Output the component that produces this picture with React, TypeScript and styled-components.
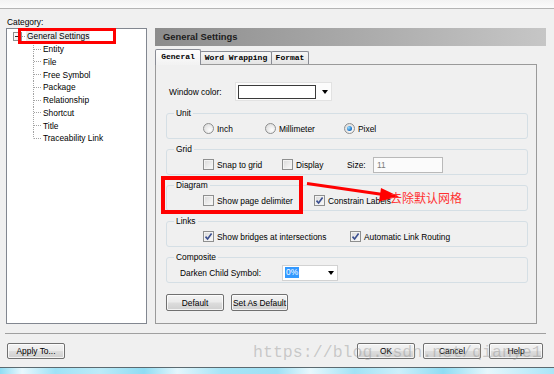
import React from "react";
import styled, { createGlobalStyle } from "styled-components";

const GlobalStyle = createGlobalStyle`
  html, body {
    margin: 0;
    padding: 0;
    background: #f0f0f0;
    overflow: hidden;
  }
  body {
    font-family: "Liberation Sans", Arial, sans-serif;
    font-size: 8.4px;
    color: #000;
  }
  * {
    box-sizing: border-box;
  }
`;

const Screen = styled.div`
  position: relative;
  width: 554px;
  height: 374px;
  display: flex;
  flex-direction: column;
  overflow: hidden;
`;

const TitleStrip = styled.div`
  flex: none;
  height: 9px;
  background: linear-gradient(#f3f3f3, #fbfbfb);
  border-bottom: 1px solid #b4b4b4;
`;

const Dialog = styled.div`
  flex: 1;
  display: flex;
  flex-direction: column;
  padding: 0 8px 0 6px;
`;

const CategoryLabel = styled.div`
  margin-top: 7px;
  height: 12px;
  line-height: 12px;
  padding-left: 1px;
`;

const MainRow = styled.div`
  display: flex;
  gap: 8px;
  height: 296px;
`;

/* ---------- tree ---------- */

const Tree = styled.div`
  width: 141px;
  height: 100%;
  border: 1px solid #828790;
  background: #fff;
  padding: 1px 0 0 6px;
`;

const RootRow = styled.div`
  height: 12.75px;
  display: flex;
  align-items: center;
`;

const Expander = styled.span`
  flex: none;
  width: 9px;
  height: 9px;
  border: 1px solid #919191;
  background: linear-gradient(135deg, #fff, #e6e6e6);
  display: flex;
  align-items: center;
  justify-content: center;
  &::after {
    content: "";
    width: 5px;
    height: 1px;
    background: #2b2b2b;
  }
`;

const Connector = styled.span`
  flex: none;
  width: 4px;
  height: 1px;
  background: repeating-linear-gradient(to right, #a3a3a3 0 1px, transparent 1px 2px);
`;

const NodeLabel = styled.span<{ $selected?: boolean }>`
  padding: 0 1px;
  line-height: 11px;
  background: ${(p) => (p.$selected ? "#ececec" : "transparent")};
  white-space: nowrap;
`;

const Children = styled.div`
  margin-left: 20px;
`;

const ChildRow = styled.div<{ $last?: boolean }>`
  height: 12.75px;
  display: flex;
  align-items: center;
  padding-left: 10px;
  white-space: nowrap;
  background-image: repeating-linear-gradient(to bottom, #a3a3a3 0 1px, transparent 1px 2px),
    repeating-linear-gradient(to right, #a3a3a3 0 1px, transparent 1px 2px);
  background-repeat: no-repeat;
  background-size: 1px ${(p) => (p.$last ? "50%" : "100%")}, 8px 1px;
  background-position: 0 0, 1px 50%;
`;

/* ---------- right pane ---------- */

const RightPane = styled.div`
  width: 391px;
  display: flex;
  flex-direction: column;
`;

const PaneHeader = styled.div`
  height: 18px;
  padding-left: 8px;
  line-height: 18px;
  font-weight: bold;
  font-size: 9.4px;
  color: #1c1c1c;
  background: linear-gradient(to right, #8c8c8c, #c6c6c6);
`;

const TabStrip = styled.div`
  position: relative;
  z-index: 1;
  display: flex;
  align-items: flex-end;
  height: 15px;
  margin-top: 3px;
`;

const Tab = styled.div<{ $active?: boolean; $w: number }>`
  flex: none;
  width: ${(p) => p.$w}px;
  height: ${(p) => (p.$active ? 16 : 13)}px;
  margin-bottom: ${(p) => (p.$active ? -1 : 0)}px;
  margin-left: -1px;
  &:first-child {
    margin-left: 0;
  }
  border: 1px solid #898c95;
  border-bottom: none;
  border-radius: 2px 2px 0 0;
  background: ${(p) =>
    p.$active
      ? "linear-gradient(#fdfdfd, #f2f2f2)"
      : "linear-gradient(#f6f6f6, #e4e4e4)"};
  font-family: "Liberation Mono", "Courier New", monospace;
  font-weight: bold;
  font-size: 8px;
  line-height: ${(p) => (p.$active ? 13 : 11)}px;
  text-align: center;
  white-space: nowrap;
`;

const TabPage = styled.div`
  width: 382px;
  flex: 1;
  display: flex;
  flex-direction: column;
  border: 1px solid #9a9a9a;
  background: #f0f0f0;
  padding: 17px 8px 0 10px;
`;

const FieldRow = styled.div`
  display: flex;
  align-items: center;
  height: 19px;
`;

const FieldLabel = styled.span<{ $w: number }>`
  flex: none;
  width: ${(p) => p.$w}px;
  white-space: nowrap;
`;

const ColorCombo = styled.div`
  width: 97px;
  height: 19px;
  display: flex;
  align-items: center;
  padding-left: 2px;
  border: 1px solid #e2e2e2;
  background: #fcfcfc;
`;

const Swatch = styled.div`
  width: 78px;
  height: 14px;
  border: 1px solid #3a3a3a;
  background: #fff;
`;

const DropArrow = styled.span<{ $gap?: number }>`
  flex: none;
  width: 0;
  height: 0;
  margin-left: ${(p) => (p.$gap !== undefined ? `${p.$gap}px` : "auto")};
  margin-right: 3px;
  border-left: 3px solid transparent;
  border-right: 3px solid transparent;
  border-top: 4px solid #000;
`;

const Groups = styled.div`
  display: flex;
  flex-direction: column;
  gap: 4px;
  margin-top: 6px;
`;

const Group = styled.fieldset`
  margin: 0;
  min-width: 0;
  width: 362px;
  padding: 2px 7px;
  border: 1px solid #d5dfe5;
  border-radius: 3px;
`;

const Legend = styled.legend`
  padding: 0 2px;
  line-height: 12px;
  font-size: 8.4px;
`;

const OptionRow = styled.div<{ $indent: number }>`
  display: flex;
  align-items: center;
  height: 15px;
  padding-left: ${(p) => p.$indent}px;
`;

const Option = styled.label<{ $w?: number }>`
  flex: none;
  display: flex;
  align-items: center;
  gap: 3px;
  width: ${(p) => (p.$w ? `${p.$w}px` : "auto")};
  white-space: nowrap;
`;

const CheckBox = styled.span`
  flex: none;
  width: 11px;
  height: 11px;
  display: flex;
  align-items: center;
  justify-content: center;
  border: 1px solid #8e8f8f;
  background: linear-gradient(135deg, #d9d9d9, #fbfbfb);
  box-shadow: inset 0 0 0 1px #f3f3f3;
`;

const RadioDot = styled.span<{ $on?: boolean }>`
  flex: none;
  width: 11px;
  height: 11px;
  display: flex;
  align-items: center;
  justify-content: center;
  border-radius: 50%;
  border: 1px solid #8e8f8f;
  background: radial-gradient(circle at 65% 65%, #fdfdfd, #d6d6d6);
  &::after {
    content: "";
    display: ${(p) => (p.$on ? "block" : "none")};
    width: 5px;
    height: 5px;
    border-radius: 50%;
    background: radial-gradient(circle at 35% 35%, #9be0ff, #1d74c8 65%, #0b4786);
  }
`;

const SizeField = styled.div`
  width: 70px;
  height: 16px;
  padding-left: 3px;
  line-height: 14px;
  border: 1px solid #b9b9b9;
  background: #fbfbfb;
  color: #7a7a7a;
`;

const Select = styled.div`
  width: 56px;
  height: 16px;
  display: flex;
  align-items: center;
  padding-left: 2px;
  border: 1px solid #d2d2d2;
  background: #fff;
`;

const Selected = styled.span`
  padding: 0 1px;
  line-height: 11px;
  background: #3399ff;
  color: #fff;
`;

const PageButtons = styled.div`
  display: flex;
  gap: 7px;
  margin-top: 11px;
`;

const Button = styled.button<{ $w: number; $h?: number }>`
  flex: none;
  width: ${(p) => p.$w}px;
  height: ${(p) => p.$h ?? 16}px;
  padding: 0;
  font: inherit;
  color: #000;
  border: 1px solid #707070;
  border-radius: 2px;
  background: linear-gradient(#f3f3f3 0%, #ebebeb 48%, #dddddd 52%, #cfcfcf 100%);
  box-shadow: inset 0 0 0 1px rgba(255, 255, 255, 0.75);
`;

/* ---------- footer ---------- */

const Separator = styled.div`
  margin: 9px 0 0 -1px;
  border-top: 1px solid #a0a0a0;
`;

const FooterRow = styled.div`
  display: flex;
  align-items: center;
  gap: 8px;
  margin-top: 9px;
  padding: 0 3px 0 1px;
`;

const Spacer = styled.div`
  flex: 1;
`;

const Taskbar = styled.div`
  flex: none;
  height: 7px;
  border-top: 1px solid #5c6a70;
  background: linear-gradient(
    to right,
    #8fdcf3 0%,
    #e9f8fd 4%,
    #9fe2f6 10%,
    #bdebf8 18%,
    #8fdcf3 26%,
    #e4f6fc 32%,
    #a6e4f6 40%,
    #9fe0f4 50%,
    #e8f8fd 56%,
    #a2e2f5 64%,
    #cdeffa 72%,
    #8fdcf3 80%,
    #e6f7fc 88%,
    #a9e5f7 100%
  );
`;

const Watermark = styled.div`
  position: absolute;
  left: 253px;
  top: 344px;
  font-family: "Liberation Mono", "Courier New", monospace;
  font-size: 16.6px;
  line-height: 17px;
  color: rgba(150, 150, 150, 0.45);
  white-space: nowrap;
  pointer-events: none;
`;

/* ---------- red annotations ---------- */

const TreeMark = styled.div`
  position: absolute;
  left: 18px;
  top: 28px;
  width: 98px;
  height: 16px;
  border: 3px solid #ff0000;
`;

const DiagramMark = styled.div`
  position: absolute;
  left: 161px;
  top: 176px;
  width: 142px;
  height: 38px;
  border: 4px solid #ff0000;
`;

const Arrow = styled.svg`
  position: absolute;
  left: 300px;
  top: 176px;
  width: 100px;
  height: 30px;
`;

const Note = styled.div`
  position: absolute;
  left: 390px;
  top: 191px;
  font-family: "Noto Sans CJK SC", "Liberation Sans", sans-serif;
  font-size: 12px;
  line-height: 14px;
  color: #ff3030;
  white-space: nowrap;
`;

const Check = () => (
  <svg width="9" height="9" viewBox="0 0 9 9">
    <path d="M1.5 4.6 L3.6 7 L7.6 1.6" fill="none" stroke="#3b4f8f" strokeWidth="1.6" />
  </svg>
);

const CheckOption: React.FC<{ label: string; checked?: boolean; w?: number }> = ({
  label,
  checked,
  w,
}) => (
  <Option $w={w}>
    <CheckBox>{checked && <Check />}</CheckBox>
    {label}
  </Option>
);

const RadioOption: React.FC<{ label: string; on?: boolean; w?: number }> = ({ label, on, w }) => (
  <Option $w={w}>
    <RadioDot $on={on} />
    {label}
  </Option>
);

const children = [
  "Entity",
  "File",
  "Free Symbol",
  "Package",
  "Relationship",
  "Shortcut",
  "Title",
  "Traceability Link",
];

export default function App() {
  return (
    <Screen>
      <GlobalStyle />
      <TitleStrip />
      <Dialog>
        <CategoryLabel>Category:</CategoryLabel>
        <MainRow>
          <Tree>
            <RootRow>
              <Expander />
              <Connector />
              <NodeLabel $selected>General Settings</NodeLabel>
            </RootRow>
            <Children>
              {children.map((name, i) => (
                <ChildRow key={name} $last={i === children.length - 1}>
                  {name}
                </ChildRow>
              ))}
            </Children>
          </Tree>

          <RightPane>
            <PaneHeader>General Settings</PaneHeader>
            <TabStrip>
              <Tab $active $w={46}>
                General
              </Tab>
              <Tab $w={72}>Word Wrapping</Tab>
              <Tab $w={38}>Format</Tab>
            </TabStrip>
            <TabPage>
              <FieldRow>
                <FieldLabel $w={69} style={{ paddingLeft: 3 }}>
                  Window color:
                </FieldLabel>
                <ColorCombo>
                  <Swatch />
                  <DropArrow $gap={6} />
                </ColorCombo>
              </FieldRow>

              <Groups>
                <Group>
                  <Legend>Unit</Legend>
                  <OptionRow $indent={29}>
                    <RadioOption label="Inch" w={62} />
                    <RadioOption label="Millimeter" w={79} />
                    <RadioOption label="Pixel" on />
                  </OptionRow>
                </Group>

                <Group>
                  <Legend>Grid</Legend>
                  <OptionRow $indent={29}>
                    <CheckOption label="Snap to grid" w={79} />
                    <CheckOption label="Display" w={65} />
                    <FieldLabel $w={26}>Size:</FieldLabel>
                    <SizeField>11</SizeField>
                  </OptionRow>
                </Group>

                <Group>
                  <Legend>Diagram</Legend>
                  <OptionRow $indent={29}>
                    <CheckOption label="Show page delimiter" w={111} />
                    <CheckOption label="Constrain Labels" checked />
                  </OptionRow>
                </Group>

                <Group>
                  <Legend>Links</Legend>
                  <OptionRow $indent={29}>
                    <CheckOption label="Show bridges at intersections" checked w={147} />
                    <CheckOption label="Automatic Link Routing" checked />
                  </OptionRow>
                </Group>

                <Group>
                  <Legend>Composite</Legend>
                  <OptionRow $indent={6}>
                    <FieldLabel $w={102}>Darken Child Symbol:</FieldLabel>
                    <Select>
                      <Selected>0%</Selected>
                      <DropArrow />
                    </Select>
                  </OptionRow>
                </Group>
              </Groups>

              <PageButtons>
                <Button $w={58} $h={17}>
                  Default
                </Button>
                <Button $w={57} $h={17}>
                  Set As Default
                </Button>
              </PageButtons>
            </TabPage>
          </RightPane>
        </MainRow>

        <Separator />
        <FooterRow>
          <Button $w={58}>Apply To...</Button>
          <Spacer />
          <Button $w={58}>OK</Button>
          <Button $w={58}>Cancel</Button>
          <Button $w={54}>Help</Button>
        </FooterRow>
      </Dialog>
      <Taskbar />

      <Watermark>https://blog.csdn.net/qianye1</Watermark>

      <TreeMark />
      <DiagramMark />
      <Arrow viewBox="300 176 100 30">
        <line x1="307" y1="183.5" x2="383" y2="194.5" stroke="#ff0000" strokeWidth="3" />
        <polygon points="381,188 399,196.5 379,201.5" fill="#ff0000" />
      </Arrow>
      <Note>去除默认网格</Note>
    </Screen>
  );
}
